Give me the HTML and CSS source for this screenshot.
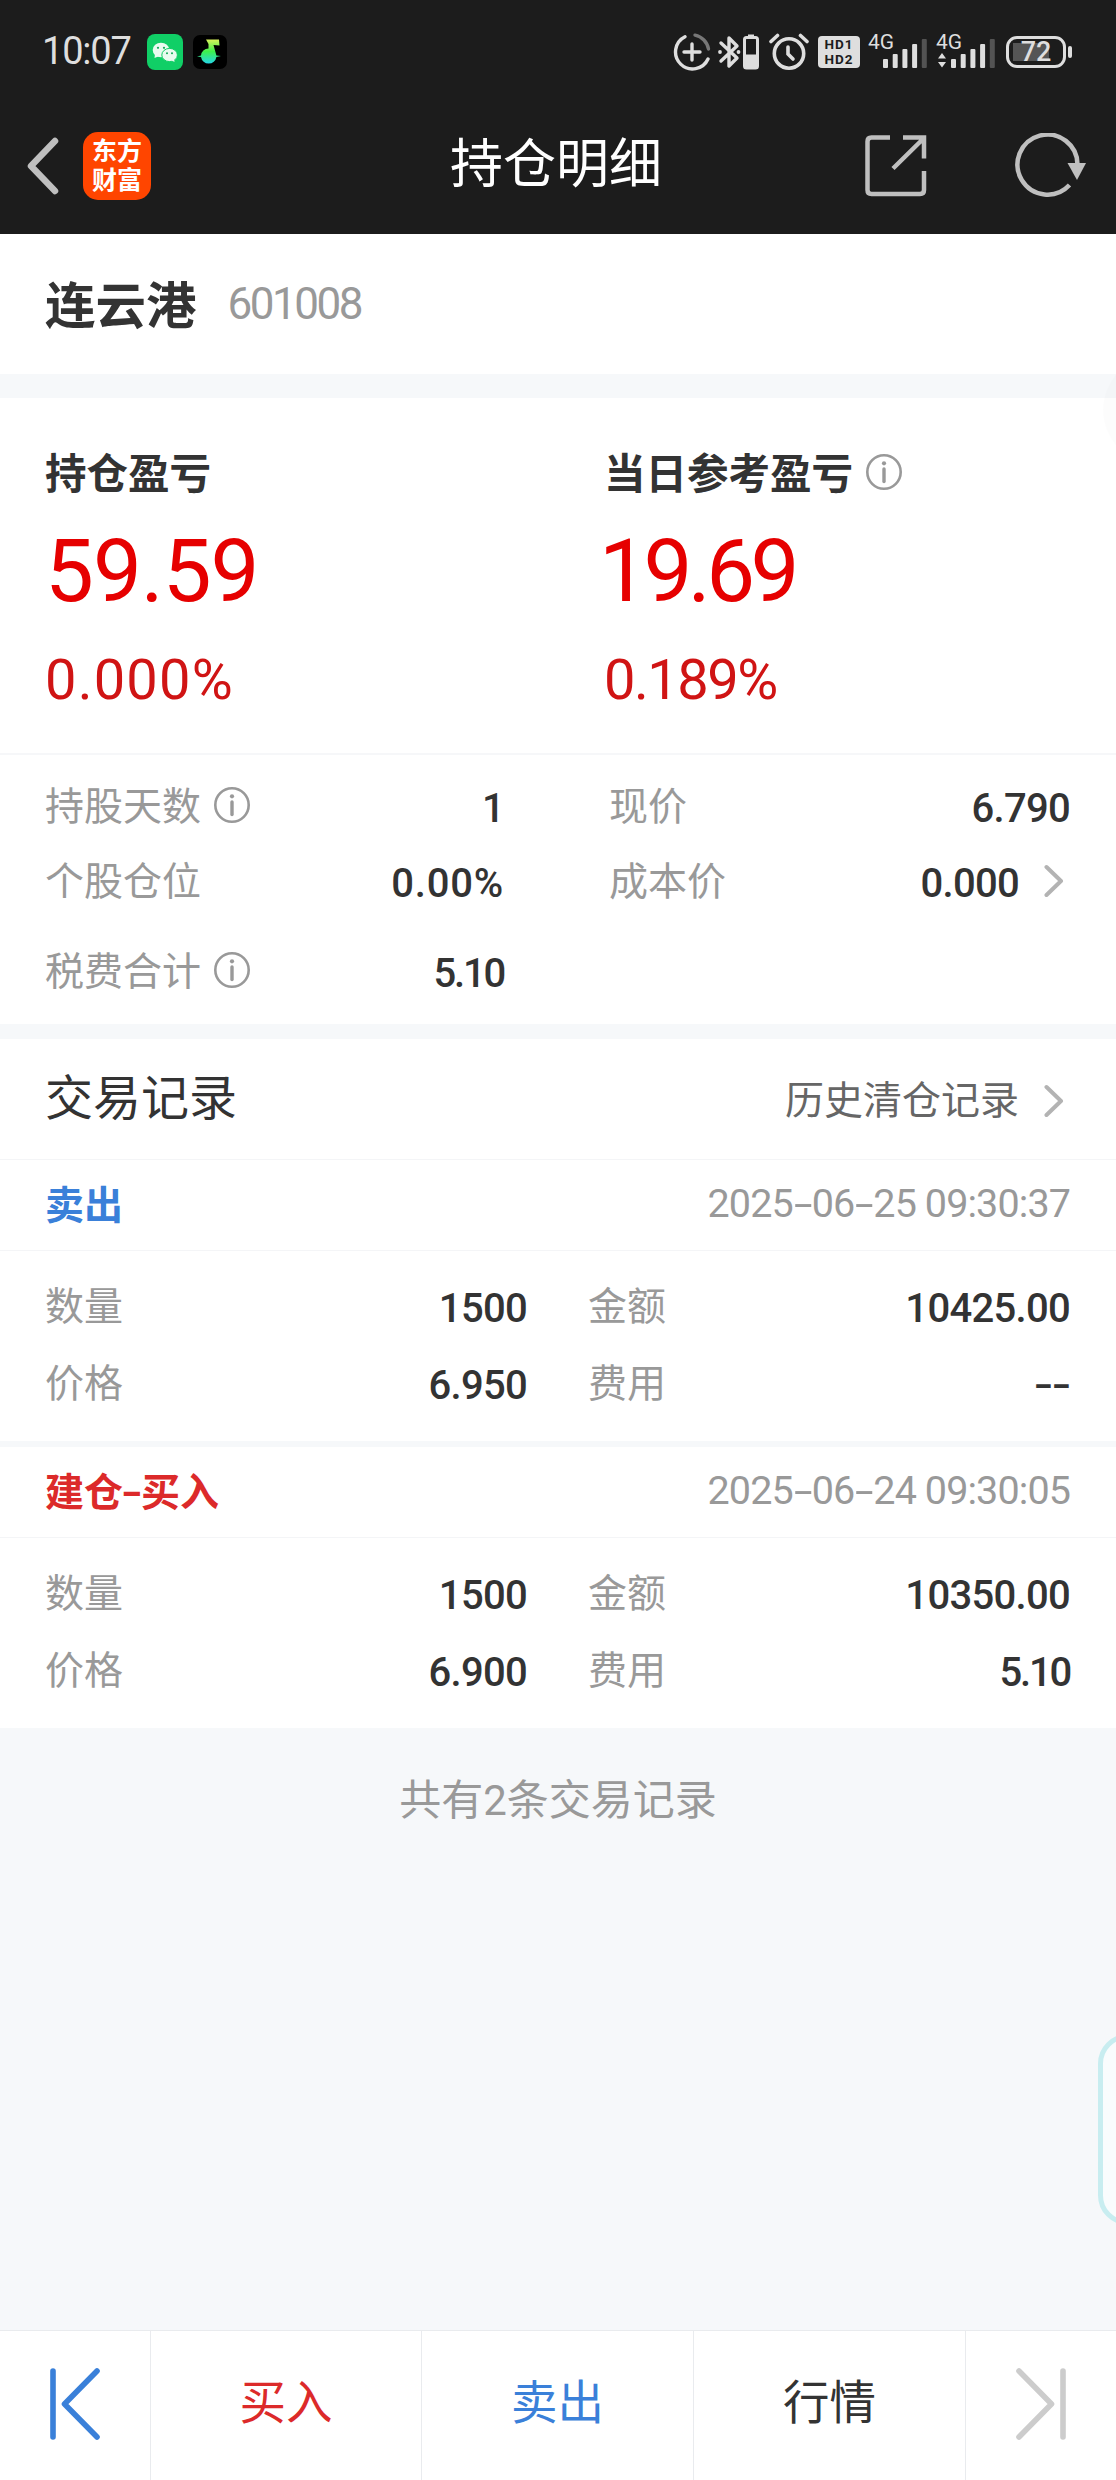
FILE: index.html
```html
<!DOCTYPE html>
<html lang="zh-CN">
<head>
    <meta charset="UTF-8">
    <title>持仓明细</title>
    <link rel="stylesheet" href="styles.css">
</head>
<body>
    <svg class="defs" width="0" height="0">
        <symbol id="info" viewBox="0 0 36 36">
            <circle cx="18" cy="18" r="16.7" fill="none" stroke="currentColor" stroke-width="2.6"/>
            <circle cx="18" cy="9.3" r="2.1" fill="currentColor"/>
            <path d="M18 15v12.6" stroke="currentColor" stroke-width="3.4" stroke-linecap="round"/>
        </symbol>
        <symbol id="arrow" viewBox="0 0 20 34">
            <path d="M2.5 3L17 17L2.5 31" fill="none" stroke="#b3b3b3" stroke-width="4" stroke-linecap="round" stroke-linejoin="round"/>
        </symbol>
        <symbol id="bars" viewBox="0 0 45 30">
            <g fill="#dedede">
                <rect x="0" y="20" width="5" height="9" rx="1"/>
                <rect x="9.7" y="15" width="5" height="14" rx="1"/>
                <rect x="19.4" y="10" width="5" height="19" rx="1"/>
                <rect x="29.1" y="5" width="5" height="24" rx="1"/>
            </g>
            <rect x="38.8" y="0" width="5" height="29" rx="1" fill="#535353"/>
        </symbol>
    </svg>

    <header class="header">
        <div class="status-bar">
            <span class="time">10:07</span>
            <svg class="app-icon" width="36" height="36" viewBox="0 0 36 36">
                <rect width="36" height="36" rx="8" fill="#10cf66"/>
                <ellipse cx="14" cy="16" rx="8.3" ry="7.3" fill="#e9fbef"/>
                <path d="M8 20l-.5 4 5-2z" fill="#e9fbef"/>
                <ellipse cx="22.6" cy="21" rx="7.8" ry="6.6" fill="#e9fbef" stroke="#10cf66" stroke-width="1"/>
                <path d="M24 26l3.5 2-.5-4z" fill="#e9fbef"/>
                <g fill="#10a955">
                    <circle cx="11" cy="13.8" r="1.1"/>
                    <circle cx="17" cy="13.8" r="1.1"/>
                    <circle cx="20" cy="19.3" r="1"/>
                    <circle cx="25" cy="19.3" r="1"/>
                </g>
            </svg>
            <svg class="app-icon" width="34" height="34" viewBox="0 0 34 34">
                <defs>
                    <linearGradient id="note" x1="0" y1="0" x2="0" y2="1">
                        <stop offset="0" stop-color="#d8f25a"/>
                        <stop offset=".5" stop-color="#3cf04c"/>
                        <stop offset="1" stop-color="#25d6e8"/>
                    </linearGradient>
                </defs>
                <rect width="34" height="34" rx="7" fill="#000"/>
                <path d="M13 4.500H26L26.500 10.500L20.500 10L23.400 20.500L28 21L23.400 22A7.800 7.800 0 0 1 8 22L4 21.500L8 20.500A7.500 7.500 0 0 1 15.500 13.500V9z" fill="url(#note)"/>
            </svg>
            <div class="status-icons">
                <svg width="38" height="38" viewBox="0 0 38 38" fill="none" stroke="#dedede" stroke-width="3.4" stroke-linecap="round">
                    <path d="M12 3.700A17 17 0 1 0 35 26"/>
                    <path d="M22 2.200A17 17 0 0 1 35.500 16" stroke="#777"/>
                    <path d="M11 19h16M19 11v16"/>
                </svg>
                <svg class="bluetooth" width="42" height="38" viewBox="0 0 42 38">
                    <path d="M3 10L19 25L11 33V5L19 13L3 28" fill="none" stroke="#dedede" stroke-width="3.4" stroke-linejoin="round" stroke-linecap="round"/>
                    <circle cx="2" cy="19" r="1.900" fill="#dedede"/>
                    <circle cx="20.500" cy="19" r="1.900" fill="#dedede"/>
                    <path d="M30 1.500h6v3h-6z" fill="#dedede"/>
                    <rect x="26.500" y="4.500" width="13" height="30.500" rx="2" fill="none" stroke="#dedede" stroke-width="3"/>
                    <path d="M26 21.500h14v14h-14z" fill="#dedede"/>
                </svg>
                <svg class="alarm" width="40" height="38" viewBox="0 0 40 38" fill="none" stroke="#dedede" stroke-width="3.600" stroke-linecap="round">
                    <circle cx="20" cy="20.500" r="14.700"/>
                    <path d="M19 14v7l5 5"/>
                    <path d="M2 8.500L8.500 2.500M31.500 2.500L38 8.500"/>
                </svg>
                <div class="hd"><span>HD1</span><span>HD2</span></div>
                <div class="signal">
                    <span>4G</span>
                    <svg width="45" height="30"><use href="#bars"/></svg>
                </div>
                <div class="signal">
                    <span>4G</span>
                    <svg class="traffic" width="8" height="15" viewBox="0 0 8 15" fill="#dedede"><path d="M0 5.500L4 0l4 5.500zM0 9L4 14.500 8 9z"/></svg>
                    <svg width="45" height="30"><use href="#bars"/></svg>
                </div>
                <div class="battery"><span>72</span></div>
            </div>
        </div>
        <div class="nav-bar">
            <svg class="back" width="34" height="58" viewBox="0 0 34 58">
                <path d="M29 4L5 29L29 54" fill="none" stroke="#bfbfbf" stroke-width="6.500" stroke-linecap="round" stroke-linejoin="round"/>
            </svg>
            <div class="logo"><span>东方</span><span>财富</span></div>
            <h1>持仓明细</h1>
            <svg class="share" width="62" height="62" viewBox="0 0 62 62" fill="none" stroke="#bfbfbf" stroke-width="4.500">
                <path d="M25 2.500H6.500Q2.500 2.500 2.500 6.500V55Q2.500 59 6.500 59H55Q59 59 59 55V36"/>
                <path d="M38 2.500H59V23.500M58 4L28 33.500"/>
            </svg>
            <svg class="refresh" width="72" height="66" viewBox="0 0 72 66">
                <path d="M54.500 52A30 30 0 1 1 62.500 32" fill="none" stroke="#bfbfbf" stroke-width="4.500"/>
                <path d="M52.500 30H71L62 47z" fill="#bfbfbf"/>
            </svg>
        </div>
    </header>

    <section class="stock">
        <h2>连云港</h2>
        <span class="code">601008</span>
    </section>

    <section class="profit">
        <div class="profit-item">
            <div class="profit-label">持仓盈亏</div>
            <div class="profit-value">59.59</div>
            <div class="profit-rate">0.000%</div>
        </div>
        <div class="profit-item">
            <div class="profit-label">当日参考盈亏 <svg class="info"><use href="#info"/></svg></div>
            <div class="profit-value day">19.69</div>
            <div class="profit-rate day">0.189%</div>
        </div>
    </section>

    <section class="details">
        <div class="cell"><span>持股天数</span><svg class="info"><use href="#info"/></svg><b>1</b></div>
        <div class="cell"><span>现价</span><b>6.790</b></div>
        <div class="cell"><span>个股仓位</span><b class="wide">0.00%</b></div>
        <div class="cell"><span>成本价</span><b>0.000</b><svg class="arrow"><use href="#arrow"/></svg></div>
        <div class="cell"><span>税费合计</span><svg class="info"><use href="#info"/></svg><b class="narrow">5.10</b></div>
    </section>

    <section class="records-title">
        <h3>交易记录</h3>
        <a>历史清仓记录</a>
        <svg class="arrow"><use href="#arrow"/></svg>
    </section>

    <section class="record">
        <div class="record-head">
            <span class="type sell">卖出</span>
            <span class="date">2025<i>-</i>06<i>-</i>25 09:30:37</span>
        </div>
        <div class="record-body">
            <div class="cell"><span>数量</span><b>1500</b></div>
            <div class="cell"><span>金额</span><b>10425.00</b></div>
            <div class="cell"><span>价格</span><b>6.950</b></div>
            <div class="cell"><span>费用</span><b class="empty"><i>-</i><i>-</i></b></div>
        </div>
    </section>

    <section class="record">
        <div class="record-head">
            <span class="type buy">建仓<i>-</i>买入</span>
            <span class="date">2025<i>-</i>06<i>-</i>24 09:30:05</span>
        </div>
        <div class="record-body">
            <div class="cell"><span>数量</span><b>1500</b></div>
            <div class="cell"><span>金额</span><b>10350.00</b></div>
            <div class="cell"><span>价格</span><b>6.900</b></div>
            <div class="cell"><span>费用</span><b class="narrow">5.10</b></div>
        </div>
    </section>

    <div class="total">共有2条交易记录</div>

    <svg class="float-ball" width="13" height="110" viewBox="0 0 13 110">
        <circle cx="55" cy="55" r="55" fill="#000" fill-opacity=".012"/>
    </svg>
    <svg class="side-panel" width="18" height="191" viewBox="0 0 18 191">
        <rect x="2.500" y="2.500" width="80" height="186" rx="27" fill="#f9fcfd" stroke="#c8edf0" stroke-width="5"/>
    </svg>

    <footer class="tab-bar">
        <div class="tab">
            <svg width="50" height="72" viewBox="0 0 50 72" fill="none" stroke="#3a80d9" stroke-width="5.600" stroke-linecap="round" stroke-linejoin="round">
                <path d="M3 3V69M47 3L14.500 36L47 69"/>
            </svg>
        </div>
        <div class="tab buy">买入</div>
        <div class="tab sell">卖出</div>
        <div class="tab">行情</div>
        <div class="tab">
            <svg width="50" height="72" viewBox="0 0 50 72" fill="none" stroke="#ccc" stroke-width="5.600" stroke-linecap="round" stroke-linejoin="round">
                <path d="M47 3V69M3 3L35.500 36L3 69"/>
            </svg>
        </div>
    </footer>
</body>
</html>
```
FILE: styles.css
```css
* {
    box-sizing: border-box;
}

body {
    margin: 0;
    width: 1116px;
    height: 2480px;
    display: flex;
    flex-direction: column;
    position: relative;
    background: #f6f8fa;
    color: #333;
    font-family: Roboto, "Noto Sans CJK SC", sans-serif;
    font-size: 39px;
    line-height: 1.2;
}

h1, h2, h3 {
    margin: 0;
    font-weight: 400;
}

svg {
    display: block;
    flex: none;
}

i {
    font-style: normal;
}

.defs {
    position: absolute;
}

/* header */
.header {
    height: 234px;
    background: #1c1c1c;
}

.status-bar {
    display: flex;
    align-items: center;
    height: 104px;
    padding: 0 45px 0 42px;
}

.time {
    width: 105px;
    color: #dedede;
    font-size: 38px;
    letter-spacing: -1.2px;
    white-space: nowrap;
}

.app-icon {
    margin-right: 10px;
}

.status-icons {
    display: flex;
    align-items: center;
    margin-left: auto;
    height: 38px;
    color: #dedede;
}

.bluetooth {
    margin-left: 7px;
}

.alarm {
    margin-left: 9px;
}

.hd {
    display: flex;
    flex-direction: column;
    justify-content: center;
    width: 42px;
    height: 32px;
    margin: 0 8px 0 9px;
    border-radius: 4px;
    background: #dedede;
    color: #1c1c1c;
    font-size: 13.5px;
    font-weight: 700;
    letter-spacing: 1px;
    line-height: 15px;
    text-align: center;
}

.signal {
    position: relative;
    width: 60px;
    height: 34px;
    padding: 4px 0 0 15px;
    margin-right: 8px;
}

.signal span {
    position: absolute;
    left: 0;
    top: -3px;
    font-size: 21px;
    line-height: 20px;
}

.traffic {
    position: absolute;
    left: 2px;
    top: 18px;
}

.battery {
    position: relative;
    width: 60px;
    height: 32px;
    margin-left: 2px;
    margin-right: 5px;
    border: 3px solid #dedede;
    border-radius: 11px;
    background: linear-gradient(#555, #555) 4px 4px / 36px 18px no-repeat;
    font-size: 27px;
    font-weight: 500;
    line-height: 27px;
    text-align: center;
}

.battery::after {
    content: "";
    position: absolute;
    left: 59px;
    top: 7px;
    width: 4px;
    height: 12px;
    border-radius: 2px;
    background: #dedede;
}

.nav-bar {
    display: flex;
    align-items: center;
    height: 124px;
    padding: 0 29px 0 26px;
}

.logo {
    display: flex;
    flex-direction: column;
    justify-content: center;
    width: 68px;
    height: 68px;
    margin-left: 23px;
    border-radius: 15px;
    background: #ff4500;
    color: #fff;
    font-size: 25px;
    font-weight: 700;
    line-height: 29px;
    text-align: center;
}

.nav-bar h1 {
    width: 220px;
    margin: 0 auto 0 299px;
    color: #fff;
    font-size: 53px;
}

.refresh {
    margin-left: 88px;
}

/* stock name */
.stock {
    display: flex;
    align-items: center;
    height: 140px;
    padding: 0 45px;
    background: #fff;
}

.stock h2 {
    padding-top: 6px;
    font-size: 50.5px;
    font-weight: 700;
}

.code {
    margin-left: 31px;
    color: #999;
    font-size: 44px;
    letter-spacing: -2.5px;
}

/* profit */
.profit {
    display: grid;
    grid-template-columns: 559px 1fr;
    height: 355px;
    margin-top: 24px;
    padding: 50px 0 0 45px;
    background: #fff;
}

.profit-label {
    display: flex;
    align-items: center;
    height: 50px;
    padding-top: 3px;
    font-size: 41.5px;
    font-weight: 700;
}

.info {
    width: 36px;
    height: 36px;
    margin: -5px 0 0 13px;
    color: #999;
}

.profit-value {
    height: 144px;
    color: #e60000;
    font-size: 87px;
    line-height: 146px;
    letter-spacing: -1px;
}

.profit-rate {
    height: 76px;
    color: #d01414;
    font-size: 56px;
    line-height: 76px;
    letter-spacing: 1.2px;
}

.profit-value.day {
    margin-left: -5px;
    letter-spacing: -4.5px;
}

.profit-rate.day {
    letter-spacing: -1.5px;
}

/* position details */
.details {
    display: grid;
    grid-template-columns: 459px 461px;
    grid-template-rows: 75px 75px 105px;
    column-gap: 105px;
    height: 271px;
    padding: 15px 46px 0 45px;
    border-top: 2px solid #f6f7f9;
    background: #fff;
}

.cell {
    display: flex;
    align-items: center;
}

.cell span {
    color: #999;
}

.cell b {
    margin-left: auto;
    padding-top: 3px;
    font-size: 40px;
    font-weight: 500;
    letter-spacing: -.7px;
}

.cell .wide {
    letter-spacing: .8px;
}

.cell .narrow {
    letter-spacing: -2.2px;
}

.arrow {
    width: 20px;
    height: 34px;
    margin: -4px 6px 0 25px;
}

/* records */
.records-title {
    display: flex;
    align-items: center;
    height: 121px;
    margin-top: 15px;
    padding: 0 46px 0 45px;
    border-bottom: 1px solid #f4f5f7;
    background: #fff;
}

.records-title h3 {
    font-size: 48px;
}

.records-title a {
    margin-left: auto;
    padding-top: 5px;
    color: #666;
}

.records-title .arrow {
    margin-top: 4px;
}

.record {
    height: 281px;
    margin-bottom: 6px;
    background: #fff;
}

.record-head {
    display: flex;
    align-items: center;
    justify-content: space-between;
    height: 91px;
    padding: 0 46px 2px 45px;
    border-bottom: 1px solid #f4f5f7;
}

.type {
    padding-top: 4px;
    font-weight: 700;
}

.type i {
    display: inline-block;
    width: 18px;
    transform: scaleX(1.5);
    text-align: center;
}

.buy {
    color: #dc2a2a;
}

.sell {
    color: #3a80d9;
}

.date {
    color: #999;
    font-size: 39.5px;
    letter-spacing: -.9px;
}

.date i {
    display: inline-block;
    width: 19px;
    transform: scaleX(1.7);
    text-align: center;
}

.record-body {
    display: grid;
    grid-template-columns: 482px 482px;
    grid-template-rows: 77px 77px;
    column-gap: 61px;
    padding: 18px 46px 0 45px;
}

.empty i {
    display: inline-block;
    width: 18px;
    transform: scaleX(1.4);
    text-align: center;
}

.total {
    margin-top: 32px;
    color: #999;
    font-size: 42px;
    line-height: 70px;
    text-align: center;
}

/* floating assistants */
.float-ball {
    position: absolute;
    right: 0;
    top: 355px;
}

.side-panel {
    position: absolute;
    right: 0;
    top: 2034px;
}

/* bottom bar */
.tab-bar {
    display: grid;
    grid-template-columns: 151px 271px 272px 272px 150px;
    height: 150px;
    margin-top: auto;
    border-top: 1px solid #e9ebee;
    background: #fff;
    font-size: 46.5px;
}

.tab {
    display: flex;
    align-items: center;
    justify-content: center;
    padding-bottom: 4px;
    border-right: 1px solid #e9ebee;
}

.tab:last-child {
    border-right: 0;
}
```
